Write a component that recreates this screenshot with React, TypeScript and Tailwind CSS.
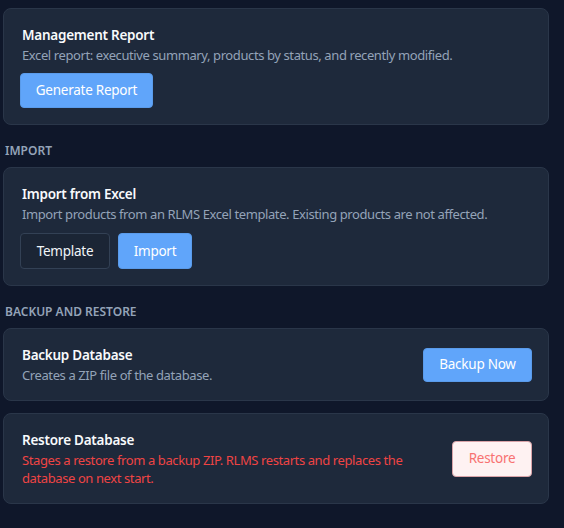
import { FC, ReactNode } from "react";

const font = { fontFamily: '"Noto Sans", "Open Sans", sans-serif' };

const Card: FC<{ children: ReactNode; className?: string }> = ({ children, className }) => (
    <div className={"w-full rounded-lg border border-[#2a3649] bg-[#1e293b] p-4 " + (className ?? "")}>
        {children}
    </div>
);

const SectionLabel: FC<{ children: ReactNode }> = ({ children }) => (
    <div className="mt-[16px] mb-[6px] pl-[2px] text-[12px] leading-5 font-semibold uppercase text-[#94a3b8]">
        {children}
    </div>
);

const Title: FC<{ children: ReactNode }> = ({ children }) => (
    <div className="pl-[2px] text-[13.5px] leading-5 font-semibold tracking-[-0.25px] text-[#f8fafc]">{children}</div>
);

const Desc: FC<{ children: ReactNode; danger?: boolean }> = ({ children, danger }) => (
    <div
        className={
            "mt-0.5 pl-[2px] text-[13px] tracking-[-0.4px] " +
            (danger ? "text-[#ef4444] leading-[17.5px]" : "text-[#94a3b8] leading-[17px]")
        }
    >
        {children}
    </div>
);

const btn = "shrink-0 rounded text-[13.5px] tracking-[-0.25px]";
const primary = btn + " border border-[#5a9bea] bg-[#60a5fa] text-white";

export default function App() {
    return (
        <div className="w-[564px] h-[528px] bg-[#0f172a] pl-[3px] pt-2 overflow-hidden" style={font}>
            <div className="w-[546px]">
                <Card>
                    <Title>Management Report</Title>
                    <Desc>Excel report: executive summary, products by status, and recently modified.</Desc>
                    <button className={primary + " mt-[9px] h-[35px] w-[133px]"}>Generate Report</button>
                </Card>

                <SectionLabel>Import</SectionLabel>
                <Card>
                    <Title>Import from Excel</Title>
                    <Desc>Import products from an RLMS Excel template. Existing products are not affected.</Desc>
                    <div className="mt-[10px] flex gap-2">
                        <button className={btn + " h-[36px] w-[90px] border border-[#334155] bg-[#1b2535] text-[#f1f5f9]"}>
                            Template
                        </button>
                        <button className={primary + " h-[36px] w-[74px]"}>Import</button>
                    </div>
                </Card>

                <SectionLabel>Backup and Restore</SectionLabel>
                <div className="flex flex-col gap-3">
                    <Card className="flex items-center justify-between gap-4">
                        <div>
                            <Title>Backup Database</Title>
                            <Desc>Creates a ZIP file of the database.</Desc>
                        </div>
                        <button className={primary + " h-[34px] w-[109px]"}>Backup Now</button>
                    </Card>
                    <Card className="flex items-center justify-between gap-4">
                        <div className="max-w-[400px]">
                            <Title>Restore Database</Title>
                            <Desc danger>
                                Stages a restore from a backup ZIP. RLMS restarts and replaces the database on next start.
                            </Desc>
                        </div>
                        <button className={btn + " h-[36px] w-[80px] border border-[#d9a3a8] bg-[#fef2f2] text-[#f87171]"}>
                            Restore
                        </button>
                    </Card>
                </div>
            </div>
        </div>
    );
}
